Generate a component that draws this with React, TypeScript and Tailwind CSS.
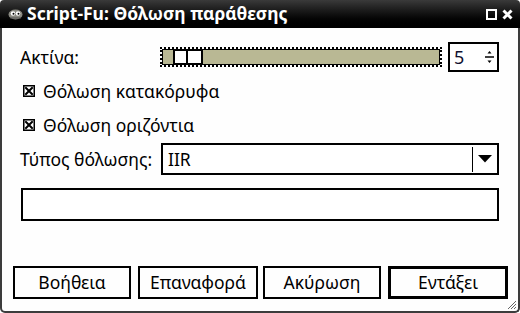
import React from "react";

function Check() {
  return (
    <svg width="12" height="12" viewBox="0 0 12 12" className="shrink-0">
      <rect x="0.75" y="0.75" width="10.5" height="10.5" fill="white" stroke="black" strokeWidth="1.5" />
      <path d="M3 3 L9 9 M9 3 L3 9" stroke="black" strokeWidth="2" strokeLinecap="square" />
    </svg>
  );
}

export default function App() {
  const font = { fontFamily: '"Noto Sans", "Open Sans", "DejaVu Sans", sans-serif' };
  return (
    <div className="w-[520px] h-[313px] bg-white overflow-hidden text-black" style={font}>
      <div className="flex flex-col w-[520px] h-[313px]">
        {/* Title bar */}
        <div className="h-[28px] shrink-0 flex items-center bg-gradient-to-b from-[#3a3a3a] via-[#111111] to-black rounded-t-[4px] pl-[8px] pr-[7px]">
          <svg width="15" height="12" viewBox="0 0 15 12" className="shrink-0">
            <ellipse cx="7.5" cy="6.5" rx="7" ry="5" fill="#8a8a82" />
            <circle cx="5" cy="5.5" r="2.3" fill="white" />
            <circle cx="10" cy="5.5" r="2.3" fill="white" />
            <circle cx="5.5" cy="5.8" r="1" fill="black" />
            <circle cx="10.5" cy="5.8" r="1" fill="black" />
            <path d="M2 10 L13 10" stroke="#555" strokeWidth="1" />
          </svg>
          <span className="ml-[4px] text-white font-bold text-[17.5px] leading-none">
            Script-Fu: Θόλωση παράθεσης
          </span>
          <div className="ml-auto flex items-center gap-[5px]">
            <div className="w-[11px] h-[11px] border-2 border-white" />
            <svg width="11" height="11" viewBox="0 0 11 11">
              <path d="M1.5 1.5 L9.5 9.5 M9.5 1.5 L1.5 9.5" stroke="white" strokeWidth="3" />
            </svg>
          </div>
        </div>

        {/* Body */}
        <div className="flex-1 flex flex-col border-x-2 border-b-2 border-[#3c3c3c] rounded-b-[5px] bg-[#fefefe] relative">
          <div className="pl-[18px] pr-[19px] pt-[14px] flex flex-col">
            {/* Row 1 */}
            <div className="h-[30px] flex items-center">
              <span className="text-[17.5px] w-[140px]">Ακτίνα:</span>
              <div className="w-[282px] h-[20px] border-2 border-dotted border-black p-0">
                <div className="w-full h-full border border-black bg-[#b9b894] flex items-stretch">
                  <div className="ml-[10px] flex border-2 border-black -my-[1px]">
                    <div className="w-[13px] bg-white border-r-2 border-black" />
                    <div className="w-[13px] bg-white" />
                  </div>
                </div>
              </div>
              <div className="ml-[6px] w-[51px] h-[30px] border-2 border-black flex items-center bg-white">
                <span className="ml-[4px] text-[18px] text-[#101030]">5</span>
                <div className="ml-auto mr-[3px] flex flex-col items-center">
                  <svg width="9" height="18" viewBox="0 0 9 18">
                    <path d="M2.5 5.5 L4.5 3 L6.5 5.5 Z" fill="black" />
                    <path d="M0 9 L9 9" stroke="black" strokeWidth="1.5" />
                    <path d="M2.5 12.5 L4.5 15 L6.5 12.5 Z" fill="black" />
                  </svg>
                </div>
              </div>
            </div>

            {/* Checkboxes */}
            <div className="h-[34px] mt-[2px] flex items-center pl-[3px] gap-[8px]">
              <Check />
              <span className="text-[17.5px]">Θόλωση κατακόρυφα</span>
            </div>
            <div className="h-[34px] flex items-center pl-[3px] gap-[8px]">
              <Check />
              <span className="text-[17.5px]">Θόλωση οριζόντια</span>
            </div>

            {/* Combo */}
            <div className="h-[32px] mt-[1px] flex items-center">
              <span className="text-[17.5px] w-[141px]">Τύπος θόλωσης:</span>
              <div className="flex-1 h-[32px] border-2 border-black bg-white flex items-center">
                <span className="ml-[5px] text-[17.5px]">IIR</span>
                <div className="ml-auto w-[1px] h-[25px] bg-black" />
                <svg width="14" height="8" viewBox="0 0 14 8" className="ml-[5px] mr-[5px]">
                  <path d="M0 0 L14 0 L7 7.5 Z" fill="black" />
                </svg>
              </div>
            </div>

            {/* Entry */}
            <div className="mt-[13px] ml-[1px] h-[33px] border-2 border-black bg-white" />
          </div>

          {/* Buttons */}
          <div className="mt-[45px] flex items-center pl-[11px]">
            <div className="w-[118px] h-[33px] border-2 border-black flex items-center justify-center text-[17.5px]">Βοήθεια</div>
            <div className="ml-[7px] w-[120px] h-[33px] border-2 border-black flex items-center justify-center text-[17.5px]">Επαναφορά</div>
            <div className="ml-[5px] w-[118px] h-[33px] border-2 border-black flex items-center justify-center text-[17.5px]">Ακύρωση</div>
            <div className="ml-[7px] w-[120px] h-[33px] border-[3px] border-black flex items-center justify-center text-[17.5px]">Εντάξει</div>
          </div>

          {/* resize grip */}
          <svg width="12" height="12" viewBox="0 0 12 12" className="absolute right-[1px] bottom-[1px]">
            <path d="M11 3 L3 11 M11 6 L6 11 M11 9 L9 11" stroke="#666" strokeWidth="1" />
          </svg>
        </div>
      </div>
    </div>
  );
}
